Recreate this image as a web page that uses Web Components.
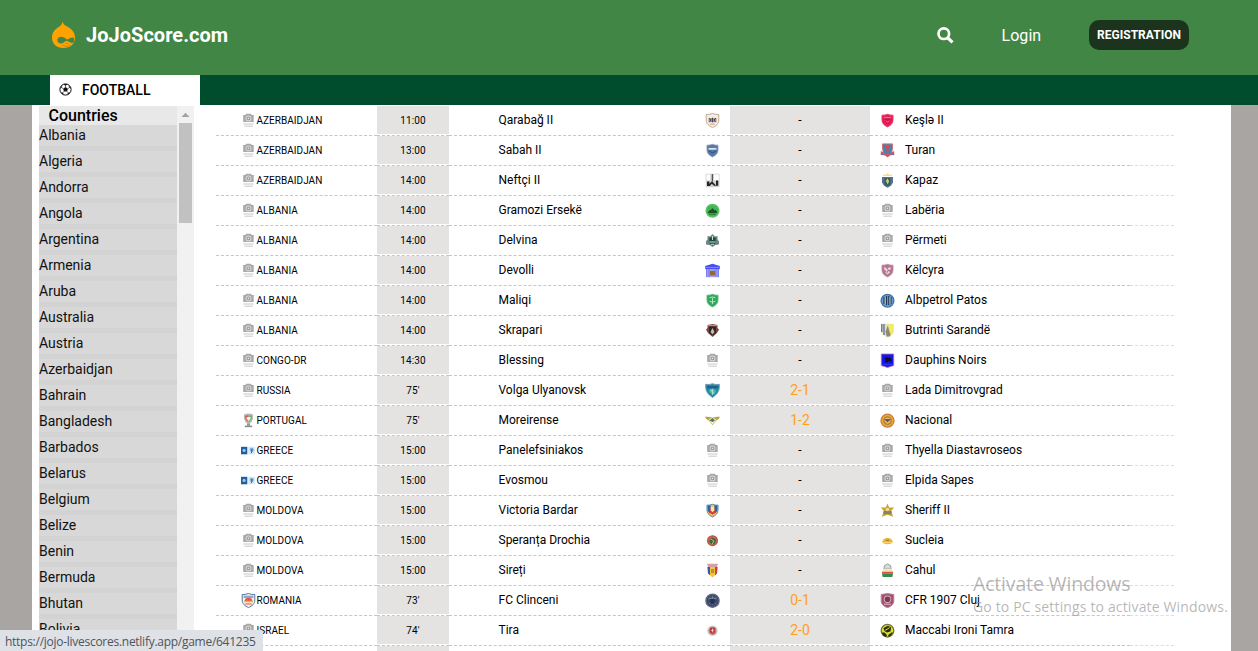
<!DOCTYPE html>
<html lang="en">
<head>
<meta charset="utf-8">
<title>JoJoScore.com</title>
<style>
html,body{margin:0;height:100%;overflow:hidden;background:#a9a5a3;font-family:Roboto,"Liberation Sans",sans-serif;color:#000}
</style>
</head>
<body>
<jojo-app></jojo-app>
<script>
const cam = '<g><path d="M2.2 2h2l1-1.300h4.600l1 1.300h1.900v7H2.200z" fill="#a9a9a9"/><circle cx="7.500" cy="5.400" r="2.900" fill="#d8d8d8"/><circle cx="7.500" cy="5.400" r="1.900" fill="#999"/><circle cx="7.500" cy="5.400" r=".8" fill="#e4e4e4"/><path d="M2.400 11h10.200M3.500 13.200h8.300" stroke="#dadada" stroke-width="1.400"/></g>';
const shield = (f, s, inner = '') => `<path d="M1.200 1.500Q4.500 1.700 7.500.5q3 1.200 6.300 1V7c0 4-2.800 6-6.300 7.600C4 13 1.200 11 1.200 7z" fill="${f}" stroke="${s}" stroke-width=".9"/>${inner}`;
const small = (f, s, inner = '') => `<g transform="translate(.9 .8) scale(.88 .9)">${shield(f, s, inner)}</g>`;
const disc = (r, f, s, inner = '') => `<circle cx="7.5" cy="7.7" r="${r}" fill="${f}" stroke="${s}" stroke-width="1.3"/>${inner}`;
const CRESTS = {
  cam,
  qarabag: shield('#f2ede8', '#b9a28f', '<path d="M3.5 5h8v4.2h-8z" fill="#b99369"/><path d="M4 5.3l2 1.6-1.5 2M7.5 4.7v4.6M11 5.3L9 6.9l1.5 2" stroke="#3c4474" fill="none"/><path d="M5 11.2h5" stroke="#d5a873"/>'),
  sabah: small('#5676a5', '#8ca1c1', '<path d="M3 4.6h9v2H3z" fill="#dbe2ee"/><path d="M3.5 8l4 2 4-2" stroke="#29497c" fill="none"/>'),
  neftci: '<path d="M.5.7h14v13q-6 1-13.700.2z" fill="#d2d2d2"/><path d="M1.5 1.5h3.8v6H1.5zM9 1.5h4.8v6H9z" fill="#fff"/><path d="M2 13V8.5h2.4v2.2L7 8.2l4 4.3V7.400h2.200v5.300H9l-2.200-2-2 2.300z" fill="#252525"/><path d="M7.400 1v7.500" stroke="#555" stroke-width="1.200"/>',
  ersek: disc(6.4, '#43b653', '#59c568', '<path d="M2.5 10l1.7-2.5 1.5-.4L7.5 5l1.8 2.3 1.5-.2L12.5 10z" fill="#1d5229"/><path d="M4 11.2h7" stroke="#257238"/>'),
  delvina: '<path d="M2.500 3L5 3.500l2.500-2.600L10 3.500l2.500-.5v3.200L14 8.500v3l-3.600.5-2.900 2-2.900-2L1 11.500v-3l1.500-2.300z" fill="#6b8580"/><path d="M4.300 4.500h6.400v5.500l-3.200 2.500L4.300 10z" fill="#174c43"/><path d="M7.500 3v4M4.500 9h6M6 11.300h3" stroke="#d4dcda"/>',
  devolli: '<path d="M.2 3L7.500.7 14.800 3v3.200H.2z" fill="#4650f2"/><path d="M1 6h13v8.200H1z" fill="#9da4f6"/><path d="M1.700 6v8M4 6v8M11 6v8M13.300 6v8" stroke="#7078f5"/><path d="M4.800 7.800h5.400v4.700H4.800z" fill="#99633f"/><path d="M1 4.500h13" stroke="#aab0ff" stroke-width=".6"/>',
  maliqi: small('#30a75a', '#62bd7e', '<path d="M4 4.500q3.500-2 7 0M4.200 8q3.300 3 6.600 0M7.500 4.500v7" stroke="#c4ecd0" fill="none"/>'),
  skrapari: '<path d="M2.500 2l5-1.100 5 1.100v3L14 6.500l-2 3.500-4.500 4-4.500-4-2-3.500L2.500 5z" fill="#79483b"/><path d="M4 3.500h7v6.500L7.500 12.500 4 10z" fill="#2b292d"/><path d="M7.500 5L5.500 9l2 2.500 2-2.500z" fill="#c4bcba"/><path d="M3 2.400h9" stroke="#ee9252"/>',
  volga: '<path d="M.7 1.300Q4 2 7.500.7q3.500 1.300 6.800.6v3.500q-.3 5.500-6.800 9.700Q1 10.300.7 4.800z" fill="#248da6" stroke="#658fa7" stroke-width=".8"/><path d="M2 3h11v2.300H2z" fill="#225e96"/><path d="M4 8q3.500-5 7 0-3.500 6-7 0" fill="#54bda4"/><path d="M5.500 6.500l4 4.500M7.500 6v6" stroke="#bde7dc" stroke-width=".8"/>',
  moreir: '<path d="M0 3.800q4.500-.4 7.500 1 3-1.400 7.500-1-1 3-3.800 3.700L7.500 12.300 3.800 7.500Q1 6.800 0 3.800" fill="#b8a43e"/><path d="M4 6l3.500-1L11 6l-1.200 2.800L7.500 11.500 5.200 8.800z" fill="#edf1df"/><path d="M4.500 7.500l3-2.500 2.500 2.500-2.500 1.500z" fill="#54745a"/>',
  victoria: small('#f3bf55', '#387ba7', '<path d="M2 2h3.500v9Q1.700 9 2 6zM13 2H9.500v9Q13.300 9 13 6z" fill="#295eaa"/><path d="M3.700 4.700l3.800 2 3.800-2-1 5-2.800 2.400L4.700 9.700z" fill="#dc3740"/><path d="M5.500 3.300h4v4l-2 2-2-2z" fill="#ffe8a3"/>'),
  drochia: disc(4.900, '#ae7654', '#c74f43', '<path d="M4 8.500l3-4 4 2-1 4-3 1z" fill="#3e633d"/><path d="M6 6.200l3 2-2 3" stroke="#d6b984" fill="none"/>'),
  sireti: '<path d="M2 .8h11l-1 3.200H3z" fill="#d69dab"/><path d="M2.500 4h10L12 10.500l-4.500 3.900L3 10.500z" fill="#f0c536"/><path d="M2.500 4H5v8.200L3 10.500z" fill="#355ab5"/><path d="M12.500 4H10v8.200l2-1.700z" fill="#d33b43"/><path d="M6 6h3v4H6z" fill="#c8844b"/>',
  clinceni: disc(6.600, '#3d4b6b', '#606982', '<path d="M7.500 2.800v9.400M4 4.300l7 6.800M11 4.300l-7 6.800" stroke="#7e8dab" stroke-width=".7"/><path d="M5.200 6h4.600v3.500l-2.300 2-2.300-2z" fill="#253253"/><path d="M3.500 6q4-2.400 8 0" stroke="#9ba5ba" fill="none" stroke-width=".6"/>'),
  tira: disc(4.600, '#dc6b6c', '#ccd4cc', '<path d="M5.200 4.800h4.600v4.500l-2.300 2-2.300-2z" fill="#bd363e"/><path d="M7.500 5.500v4M6 7.400h3" stroke="#eee" stroke-width=".7"/>'),
  kesla: small('#ee1d57', '#d83c6c', '<path d="M3.700 3.500h7.600l-1 6-2.800 2-2.800-2z" fill="#c8184a"/><path d="M3.600 4.200h7.800M5.500 7.500l2 2 2-2" stroke="#ff8aa7" fill="none"/>'),
  turan: '<path d="M2.500.9h10v4l-.9 5.400-4.100 3.500-4.100-3.500-.9-5.400z" fill="#4086b5" stroke="#ce7277"/><path d="M4 2.800h7L8.500 5v4.500h-2V5z" fill="#e14652"/><path d="M.8 8l3.200 1.800 3.500 1.200L11 9.800 14.200 8v4l-3.600.2-3.100 1.800-3.100-1.800L.8 12z" fill="#ca5966"/><path d="M.8 11.400h2.400M11.800 11.400h2.400" stroke="#4a82ac"/>',
  kapaz: '<path d="M3.200 3l-.4-2 2 1.100L7.500.3l2.700 1.800 2-1.100-.4 2z" fill="#f2e28d"/><path d="M2 4h11v5.500l-2 3.200-3.500 2L4 12.700 2 9.500z" fill="#527492"/><path d="M4.500 5h6v6l-3 2.300-3-2.300z" fill="#385d54"/><path d="M7.500 5.200L5.800 8l1.900 3.500 1.500-3.200z" fill="#cbca76"/>',
  kelcyra: small('#b4748f', '#bd93a3', '<path d="M3.500 3.500l3.500 1.500 4-1.500v3l-3 .8 2.500 2-3 2.500L5 9.800 6.500 8 4 7z" fill="#ead9df"/><path d="M6.500 4.500l2 2.500-1.500 3" stroke="#97536f" fill="none"/>'),
  patos: disc(6.400, '#6e9dd1', '#3e72aa', '<path d="M4 4v7M6.500 3v9M8.800 3v9M11 4v7" stroke="#23354f" stroke-width="1.200"/><path d="M5.200 4v7M10 4v7" stroke="#d4d5bc" stroke-width=".7"/>'),
  butrinti: '<path d="M1 .7h12.800v7.700Q12.800 12.500 7.500 14.500 1.700 12.300 1 8z" fill="#e7e6b1"/><path d="M1.800 1v8M4 1v11" stroke="#6871a6" stroke-width="1.400"/><path d="M8.500 1h5v8l-4.500 4.500" fill="#f1ed60"/><path d="M7.800 2.400L5.500 8.500l1.200 5h3l1-2-1.200-3z" fill="#8c8c76"/>',
  dauphins: '<path d="M1.300 1h12.400v11.600l-6.200 1.900-6.200-1.900z" fill="#1616ed" stroke="#bc7393" stroke-width=".8"/><path d="M4 5.200q3-2 7 0l.7 4.600-2.100-1.700L7 9.500l-2.500-.3 1-2.500z" fill="#0d102e"/><path d="M3 11.400h9" stroke="#4858fb" stroke-width=".5"/>',
  nacional: disc(6.500, '#e9aa36', '#ca7c41', '<circle cx="7.500" cy="7.700" r="4.400" fill="#b38042"/><path d="M4.800 5.400l2.700-1 2.700 1v3.500l-2.700 2-2.700-2z" fill="#efbd5f"/><path d="M4.300 6h6.400L7.500 9.600z" fill="#59604b"/>'),
  sheriff: '<path d="M7.500.5l1.600 4h5.100l-3 3.300 1.900 6-5.600-2-5.600 2 1.900-6-3-3.300h5.100z" fill="#c9a331"/><path d="M3.500 8h8v3h-8z" fill="#868170"/><circle cx="7.500" cy="6.500" r="1.800" fill="#eadb9b"/>',
  sucleia: '<path d="M2.200 9Q3 5.200 7.500 4.700 12 5.200 12.800 9 12 11 7.500 11.200 3 11 2.200 9z" fill="#efb735"/><path d="M3 9.600h9" stroke="#f5db65"/><path d="M5.800 7.300h3.500" stroke="#a46f31"/>',
  cahul: '<path d="M3.800 5.800L4.500 2.500l3-1.600 3 1.600.7 3.300z" fill="#d7d9d3" stroke="#94a299"/><path d="M3 5.800h9L12.500 9h-10z" fill="#ebeae2"/><path d="M2 8.800h11v2H2z" fill="#dc5146"/><path d="M2 10.800h11l-.7 3.200H2.700z" fill="#358c4d"/><path d="M2.800 8.200h9.400" stroke="#f5ce52"/>',
  cfr: '<path d="M1.200 1.500L7.500.5l6.300 1v7.400q-1 4-6.300 5.800-5.300-1.800-6.300-5.800z" fill="#a15270" stroke="#ba8497"/><circle cx="7.500" cy="6.300" r="3.700" fill="#d4b2bf"/><circle cx="7.500" cy="6.300" r="2.800" fill="#7c3951"/><path d="M4 11.200h7" stroke="#e0bcc8"/>',
  maccabi: disc(6.300, '#dfdf24', '#75753b', '<path d="M2 9.500q0 3.500 4 4.500l1-2-2.500-2.500zM3.500 5L8 2.700l3.200 1.800-.8 4-3.500 1L4.500 8z" fill="#292e20"/><path d="M12.700 8.800q-.4 3.500-4 5.200L8.200 12z" fill="#22260f"/><path d="M5.200 7.300l4.400-2.600" stroke="#e8e52b"/>'),
  portugal: '<path d="M3 1.500q4.500-1.800 9 0v4q-1 4-3.400 5.200H6.400Q4 9.500 3 5.500z" fill="#b9b9b0"/><path d="M4 3q1.200-.8 3.300-.8v6.500Q4.300 7.500 4 3z" fill="#e85550"/><path d="M11 3q-1.200-.8-3.300-.8v6.500Q10.700 7.500 11 3z" fill="#67b56c"/><path d="M5.700 4h3.700v2L7.500 8 5.700 6z" fill="#f7f4e6"/><path d="M6 10.500h3v2.300H6z" fill="#999"/><path d="M3.800 13.400h7.400" stroke="#888" stroke-width="1.500"/>',
  greece: '<path d="M0 3.800h6.300v7.500H0z" fill="#1e5f9f"/><circle cx="3.100" cy="7.400" r="1.600" fill="#9cc4e4"/><path d="M7.200 3.800h7v7.500h-7z" fill="#dbe8f2"/><circle cx="10.700" cy="6.800" r="2" fill="#7bacd5"/><path d="M10.900 6v3l-1 1.200" stroke="#1e5f9f" fill="none"/>',
  romania: shield('#f7f3ec', '#3e6895', '<path d="M2.500 2.600h10v2.400h-10z" fill="#86acd0"/><path d="M3.500 8l1-2.500 3-.8 3 .8 1 2.500z" fill="#ec5040"/><path d="M3 8.500h9" stroke="#f0b542" stroke-width="1.500"/><path d="M4.300 11h6.400" stroke="#e86752" stroke-width="1.200"/>')
};
class TeamCrest extends HTMLElement {
  connectedCallback() {
    this.attachShadow({mode: 'open'}).innerHTML = `<style>:host{display:block;width:15px;height:15px;flex:none}svg{display:block;width:100%;height:100%}</style><svg viewBox="0 0 15 15">${CRESTS[this.getAttribute('name')]}</svg>`;
  }
}
customElements.define('team-crest', TeamCrest);

class SiteHeader extends HTMLElement {
  connectedCallback() {
    this.attachShadow({mode: 'open'}).innerHTML = `<style>
:host{display:flex;height:75px;background:#428646;color:#fff;align-items:center;box-sizing:border-box;padding:0 69px 5px 51px}
.logo{width:25px;height:28px;display:block}
.brand{font-weight:700;font-size:20px;letter-spacing:.03px;margin-left:10px;flex:1}
.find{width:17px;height:17px}
.login{font-size:16px;letter-spacing:.05px;margin:0 48px 0 48px;width:39.500px;white-space:nowrap}
.reg{width:100px;height:30px;border-radius:10px;background:#1c341d;font-weight:700;font-size:12px;display:flex;align-items:center;justify-content:center;letter-spacing:.02px}
</style>
<svg class="logo" viewBox="0 0 25 28"><path d="M11.500 0c.5 3 1.800 4.200 4.300 5.300C21 7.800 24 11.800 24 16.500c0 6.700-5 10.500-11.600 10.500S1 23 1 16.500C1 11 4.500 7.900 7.700 6c2.500-1.500 3.700-3 3.800-6z" fill="#ffa200"/><path d="M6.300 19c0-2 1.800-3.300 4-3.300 2.300 0 3.700 1.400 5 2.400 2 1.300 3.200-2.300 7.300-1.600.8 2 .7 5.500-1.200 5.500-2 0-4-1.700-6-2.200-1.700.2-2.500 2.700-5.100 2.700-2.600 0-4-1.500-4-3.500z" fill="#428646"/><path d="M11.500 24.300q4 2.600 7.600-.5M14.500 22.700q1.300-1.200 2.800.1" stroke="#8f9126" fill="none" stroke-width=".8"/></svg>
<div class="brand">JoJoScore.com</div>
<svg class="find" viewBox="0 0 17 17"><circle cx="6.800" cy="6.700" r="5.300" fill="none" stroke="#fff" stroke-width="2.700"/><path d="M10.800 10.800l4.700 4.600" stroke="#fff" stroke-width="3.200"/></svg>
<div class="login">Login</div><div class="reg">REGISTRATION</div>`;
  }
}
customElements.define('site-header', SiteHeader);

class SportNav extends HTMLElement {
  connectedCallback() {
    this.attachShadow({mode: 'open'}).innerHTML = `<style>
:host{display:flex;height:30px;background:#004d2e;padding-left:50px}
.tab{width:150px;background:#fff;display:flex;align-items:center;box-sizing:border-box;padding-left:9px;font-size:14px;font-weight:500}
svg{width:13px;height:13px;margin:-1px 10px 0 0}
</style><div class="tab"><svg viewBox="0 0 13 13"><circle cx="6.500" cy="6.500" r="5.600" fill="#fff" stroke="#111" stroke-width="1"/><path d="M6.500 4l2.400 1.700-.9 2.800H5l-.9-2.800zM4.300 1.400l2.200 1.300 2.200-1.300-2.200-.5zM1 5.500l1.800-.8.6-2.200-1.700 1.800zM12 5.500l-1.800-.8-.6-2.200 1.700 1.800zM2 9.500l1.800-.1 1.100 2.200-1.900-.7zM11 9.500l-1.800-.1-1.100 2.200 1.900-.7z" fill="#111"/><path d="M6.500 2.500V4M3 4.900l1.200.8M10 4.900l-1.200.8M3.800 9.600L5 8.500M9.200 9.600L8 8.500" stroke="#111" stroke-width=".6"/></svg><span>FOOTBALL</span></div>`;
  }
}
customElements.define('sport-nav', SportNav);

const COUNTRIES = 'Albania Algeria Andorra Angola Argentina Armenia Aruba Australia Austria Azerbaidjan Bahrain Bangladesh Barbados Belarus Belgium Belize Benin Bermuda Bhutan Bolivia'.split(' ');
class CountryList extends HTMLElement {
  connectedCallback() {
    this.attachShadow({mode: 'open'}).innerHTML = `<style>
:host{display:flex;width:155px;height:545px;overflow:hidden;flex:none}
.list{width:138px}
.title{height:19px;line-height:19px;background:#e8e8e8;font-size:16px;font-weight:500;padding-left:9.500px;box-sizing:border-box;letter-spacing:0}
.item{height:21px;line-height:20px;background:#d8d8d8;border-bottom:5px solid #d3d3d3;font-size:14px;color:#111}
.bar{width:17px;background:#f1f1f1;display:flex;flex-direction:column;align-items:center}
.bar svg{width:17px;height:17px}
.thumb{width:13px;height:100px;background:#c1c1c1}
</style><div class="list"><div class="title">Countries</div>${COUNTRIES.map(c => `<div class="item">${c}</div>`).join('')}</div>
<div class="bar"><svg viewBox="0 0 17 17"><path d="M4.500 11l4-4.300 4 4.300z" fill="#a3a3a3"/></svg><div class="thumb"></div></div>`;
  }
}
customElements.define('country-list', CountryList);

class MatchRow extends HTMLElement {
  connectedCallback() {
    const [country, flag, time, home, hc, score, ac, away] = this.match;
    const live = score && score !== '-';
    this.attachShadow({mode: 'open'}).innerHTML = `<style>
:host{display:grid;grid-template-columns:161px 72px 281px 140px 260px 44px;height:30px;font-size:12px;white-space:nowrap}
.c{height:29px;border-bottom:1px dashed #c6c6c6;display:flex;box-sizing:content-box}
.country{font-size:10px;padding-left:25px;letter-spacing:.03px;line-height:30px}
.country team-crest{margin:7px .5px 0 0}
.time span,.score span{height:28px;flex:1;background:#e4e3e1;text-align:center;line-height:28px}
.time span{font-size:10px;letter-spacing:.15px;line-height:30px}
.home{padding-left:49.500px;line-height:29px}
.home span{width:206.500px}
.home team-crest,.away team-crest{margin-top:7px}
.score .live{color:#ff9f1c;font-size:14px}
.away{padding-left:10px;line-height:29px}
.away span{margin-left:10px}
.last{border-bottom-color:#ddd}
</style>
<div class="c country">${flag ? `<team-crest name="${flag}"></team-crest>` : ''}<span>${country}</span></div>
<div class="c time"><span>${time}</span></div>
<div class="c home"><span>${home}</span>${hc ? `<team-crest name="${hc}"></team-crest>` : ''}</div>
<div class="c score"><span class="${live ? 'live' : ''}">${score}</span></div>
<div class="c away">${ac ? `<team-crest name="${ac}"></team-crest>` : ''}<span>${away}</span></div>
<div class="c last"></div>`;
  }
}
customElements.define('match-row', MatchRow);

const MATCHES = [
['AZERBAIDJAN','cam','11:00','Qarabağ II','qarabag','-','kesla','Keşlə II'],
['AZERBAIDJAN','cam','13:00','Sabah II','sabah','-','turan','Turan'],
['AZERBAIDJAN','cam','14:00','Neftçi II','neftci','-','kapaz','Kapaz'],
['ALBANIA','cam','14:00','Gramozi Ersekë','ersek','-','cam','Labëria'],
['ALBANIA','cam','14:00','Delvina','delvina','-','cam','Përmeti'],
['ALBANIA','cam','14:00','Devolli','devolli','-','kelcyra','Këlcyra'],
['ALBANIA','cam','14:00','Maliqi','maliqi','-','patos','Albpetrol Patos'],
['ALBANIA','cam','14:00','Skrapari','skrapari','-','butrinti','Butrinti Sarandë'],
['CONGO-DR','cam','14:30','Blessing','cam','-','dauphins','Dauphins Noirs'],
['RUSSIA','cam','75\'','Volga Ulyanovsk','volga','2-1','cam','Lada Dimitrovgrad'],
['PORTUGAL','portugal','75\'','Moreirense','moreir','1-2','nacional','Nacional'],
['GREECE','greece','15:00','Panelefsiniakos','cam','-','cam','Thyella Diastavroseos'],
['GREECE','greece','15:00','Evosmou','cam','-','cam','Elpida Sapes'],
['MOLDOVA','cam','15:00','Victoria Bardar','victoria','-','sheriff','Sheriff II'],
['MOLDOVA','cam','15:00','Speranța Drochia','drochia','-','sucleia','Sucleia'],
['MOLDOVA','cam','15:00','Sireți','sireti','-','cahul','Cahul'],
['ROMANIA','romania','73\'','FC Clinceni','clinceni','0-1','cfr','CFR 1907 Cluj'],
['ISRAEL','cam','74\'','Tira','tira','2-0','maccabi','Maccabi Ironi Tamra'],
['','','','','','','','']
];
class MatchTable extends HTMLElement {
  connectedCallback() {
    const root = this.attachShadow({mode: 'open'});
    root.innerHTML = '<style>:host{display:block;width:958px;height:545px;overflow:hidden;flex:none}</style>';
    for (const m of MATCHES) { const r = document.createElement('match-row'); r.match = m; root.append(r); }
  }
}
customElements.define('match-table', MatchTable);

class StatusBubble extends HTMLElement {
  connectedCallback() {
    this.attachShadow({mode: 'open'}).innerHTML = `<style>:host{display:block;position:absolute;left:0;bottom:0;width:263px;height:21px;box-sizing:border-box;padding-left:5px;background:#dee1e6;border-top-right-radius:2px;font:12px/23px "Open Sans","Noto Sans",sans-serif;color:#50545a;letter-spacing:-.27px;white-space:nowrap}</style><slot></slot>`;
  }
}
customElements.define('status-bubble', StatusBubble);

class SystemNotice extends HTMLElement {
  connectedCallback() {
    this.attachShadow({mode: 'open'}).innerHTML = `<style>:host{display:block;position:absolute;left:973px;top:570px;font-family:"Open Sans","Noto Sans",sans-serif;color:rgba(135,135,135,.6);white-space:nowrap}
.a{font-size:19.500px;line-height:28px;letter-spacing:-.17px}.b{font-size:14px;line-height:18px;letter-spacing:.15px}</style><div class="a"><slot name="title"></slot></div><div class="b"><slot></slot></div>`;
  }
}
customElements.define('system-notice', SystemNotice);

class JojoApp extends HTMLElement {
  connectedCallback() {
    this.attachShadow({mode: 'open'}).innerHTML = `<style>
:host{display:block;position:relative;height:651px;width:1258px;overflow:hidden}
main{display:flex;gap:22px;margin:0 27px 0 32px;background:#fff;height:546px;box-sizing:border-box;padding:1px 0 0 7px}
</style><site-header></site-header><sport-nav></sport-nav>
<main><country-list></country-list><match-table></match-table></main>
<status-bubble>https://jojo-livescores.netlify.app/game/641235</status-bubble>
<system-notice><span slot="title">Activate Windows</span>Go to PC settings to activate Windows.</system-notice>`;
  }
}
customElements.define('jojo-app', JojoApp);
</script>
</body>
</html>
